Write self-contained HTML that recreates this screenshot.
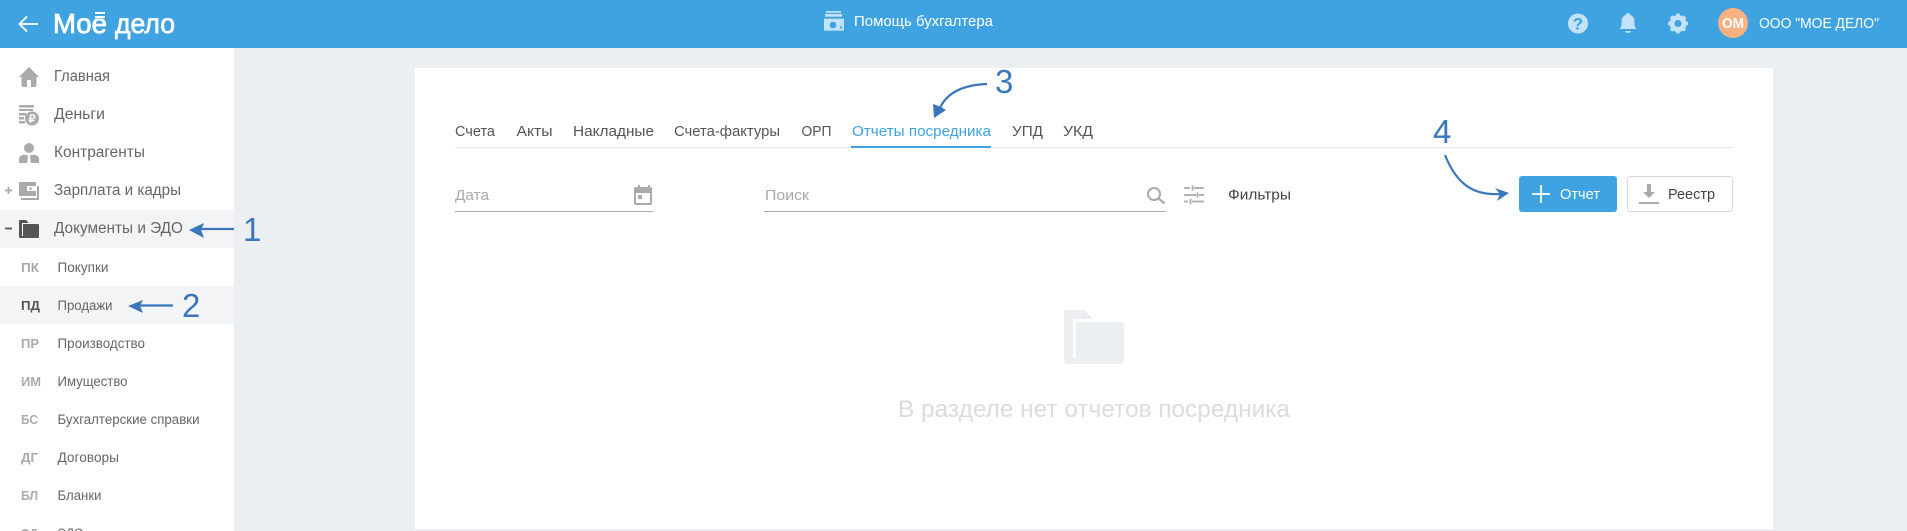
<!DOCTYPE html>
<html lang="ru"><head><meta charset="utf-8"><title>Моё дело</title>
<style>
html,body{margin:0;padding:0;width:1907px;height:531px;overflow:hidden;background:#ebeff2}
svg{display:block}
text{font-family:"Liberation Sans",sans-serif;}
.n{font-size:15.5px;fill:#666}
.s{font-size:13.5px;fill:#666}
.a{font-size:13px;font-weight:bold;fill:#aaa}
.t{font-size:15px;fill:#555}
.d{font-size:33px;fill:#3a76bc}
</style></head><body>
<svg width="1907" height="531" viewBox="0 0 1907 531" xmlns="http://www.w3.org/2000/svg">
<defs></defs>
<rect width="1907" height="531" fill="#ebeff2"/>
<!-- header -->
<rect width="1907" height="48" fill="#3ea3e0"/>
<path d="M38 24H20M27 16.500L19.500 24L27 31.500" fill="none" stroke="#fff" stroke-width="1.800"/>
<text x="53" y="33" font-size="28" fill="#fff" stroke="#fff" stroke-width=".8" textLength="54" lengthAdjust="spacingAndGlyphs">Моё</text>
<rect x="93" y="9" width="14" height="9.500" fill="#3ea3e0"/>
<rect x="95" y="12" width="10" height="2" fill="#fff"/><rect x="95" y="16" width="10" height="2" fill="#fff"/>
<text x="115" y="33" font-size="28" fill="#fff" stroke="#fff" stroke-width=".7" textLength="60" lengthAdjust="spacingAndGlyphs">дело</text>
<g fill="#c2e2f7"><rect x="826" y="11" width="15" height="1.800"/><rect x="825" y="14" width="17" height="2.700"/>
<rect x="824" y="18.700" width="20" height="12"/></g><circle cx="833" cy="25" r="3.300" fill="#3ea3e0"/><rect x="840" y="26.500" width="2" height="2" fill="#3ea3e0"/>
<text x="854" y="26" font-size="15" fill="#fff" textLength="139" lengthAdjust="spacingAndGlyphs">Помощь бухгалтера</text>
<circle cx="1578" cy="23.500" r="10" fill="#c2e2f7"/>
<text x="1578" y="29.500" font-size="17" font-weight="bold" fill="#3ea3e0" text-anchor="middle">?</text>
<path d="M1628 13c1.200 0 2 .8 2 1.800c3 1 4.500 3.500 4.500 7v4.500l2 2.700h-17l2-2.700v-4.500c0-3.500 1.500-6 4.500-7c0-1 .8-1.800 2-1.800zM1625 31h6c-.5 1.500-1.500 2-3 2s-2.500-.5-3-2z" fill="#c2e2f7"/>
<g transform="translate(1678 23.500)"><circle r="6" fill="none" stroke="#c2e2f7" stroke-width="5"/>
<g stroke="#c2e2f7" stroke-width="3.500"><path d="M0-10V-7M0 10V7M-10 0H-7M10 0H7M-7-7L-5-5M7 7L5 5M-7 7L-5 5M7-7L5-5"/></g></g>
<circle cx="1733" cy="23" r="15" fill="#fbb07f"/>
<text x="1722" y="28" font-size="15" font-weight="bold" fill="#fff" textLength="22" lengthAdjust="spacingAndGlyphs">ОМ</text>
<text x="1759" y="28" font-size="15" fill="#fff" textLength="120" lengthAdjust="spacingAndGlyphs">ООО "МОЕ ДЕЛО"</text>
<!-- sidebar -->
<rect y="48" width="234" height="483" fill="#fff"/>
<rect y="210" width="234" height="38" fill="#f3f4f5"/>
<rect y="286" width="234" height="38" fill="#f3f4f5"/>
<path d="M29 67L39 77h-2.500v8c0 1-.7 2-2 2H31v-7h-4v7h-3.500c-1.300 0-2-1-2-2v-8H19z" fill="#aaa"/>
<g fill="#aaa"><rect x="19" y="105" width="15" height="2.500"/><rect x="19" y="109" width="14" height="2"/><rect x="19" y="113" width="7" height="2.500"/><rect x="19" y="117" width="5" height="2.500"/><rect x="19" y="121" width="6" height="2.500"/></g>
<circle cx="32" cy="118.500" r="7" fill="#aaa"/>
<text x="32" y="122.500" font-size="11" font-weight="bold" fill="#fff" text-anchor="middle">₽</text>
<circle cx="29" cy="148" r="5" fill="#aaa"/>
<path d="M24 154.500c1.500 1 8.500 1 10 0c3.500 1 5 2.500 5 4.500v4H19v-4c0-2 1.500-3.500 5-4.500z" fill="#aaa"/>
<path d="M28 155h2l.7 8h-3.400z" fill="#fff"/>
<path d="M19 182h17v14H19z" fill="#aaa"/><rect x="27" y="186" width="9" height="5" fill="#fff"/><circle cx="30.500" cy="188.500" r="1.300" fill="#aaa"/>
<path d="M37 186h2v14H21v-2h16z" fill="#aaa"/>
<path id="f" transform="translate(19 220) scale(.3333) translate(-1064 -310)" d="M1064 313q0-3 3-3h18l8 9h-20v39h3v-36h44q4 0 4 4v34q0 4-4 4h-52q-4 0-4-4z" fill="#555"/>
<path d="M5 190.500h7M8.500 187v7" stroke="#aaa" stroke-width="1.800"/>
<path d="M5 228.500h7" stroke="#555" stroke-width="1.800"/>
<text class="n" x="54" y="81" textLength="56" lengthAdjust="spacingAndGlyphs">Главная</text>
<text class="n" x="54" y="119" textLength="51" lengthAdjust="spacingAndGlyphs">Деньги</text>
<text class="n" x="54" y="157" textLength="91" lengthAdjust="spacingAndGlyphs">Контрагенты</text>
<text class="n" x="54" y="195" textLength="127" lengthAdjust="spacingAndGlyphs">Зарплата и кадры</text>
<text class="n" x="54" y="233" textLength="129" lengthAdjust="spacingAndGlyphs">Документы и ЭДО</text>
<text class="a" x="21" y="272" textLength="18" lengthAdjust="spacingAndGlyphs">ПК</text><text class="s" x="57.500" y="272" textLength="51" lengthAdjust="spacingAndGlyphs">Покупки</text>
<text class="a" x="21" y="310" textLength="19" lengthAdjust="spacingAndGlyphs" style="fill:#555">ПД</text><text class="s" x="57.500" y="310" textLength="55" lengthAdjust="spacingAndGlyphs">Продажи</text>
<text class="a" x="21" y="348" textLength="18" lengthAdjust="spacingAndGlyphs">ПР</text><text class="s" x="57.500" y="348" textLength="87.500" lengthAdjust="spacingAndGlyphs">Производство</text>
<text class="a" x="21" y="386" textLength="20" lengthAdjust="spacingAndGlyphs">ИМ</text><text class="s" x="57.500" y="386" textLength="70" lengthAdjust="spacingAndGlyphs">Имущество</text>
<text class="a" x="21" y="424" textLength="17" lengthAdjust="spacingAndGlyphs">БС</text><text class="s" x="57.500" y="424" textLength="142" lengthAdjust="spacingAndGlyphs">Бухгалтерские справки</text>
<text class="a" x="21" y="462" textLength="17" lengthAdjust="spacingAndGlyphs">ДГ</text><text class="s" x="57.500" y="462" textLength="61.500" lengthAdjust="spacingAndGlyphs">Договоры</text>
<text class="a" x="21" y="500" textLength="17" lengthAdjust="spacingAndGlyphs">БЛ</text><text class="s" x="57.500" y="500" textLength="44" lengthAdjust="spacingAndGlyphs">Бланки</text>
<text class="a" x="21" y="538" textLength="17" lengthAdjust="spacingAndGlyphs">ЭД</text><text class="s" x="57.500" y="538" textLength="26" lengthAdjust="spacingAndGlyphs">ЭДО</text>
<!-- card -->
<rect x="415" y="68" width="1358" height="461" fill="#fff"/>
<text class="t" x="455" y="136" textLength="40" lengthAdjust="spacingAndGlyphs">Счета</text>
<text class="t" x="516.500" y="136" textLength="36" lengthAdjust="spacingAndGlyphs">Акты</text>
<text class="t" x="573" y="136" textLength="81" lengthAdjust="spacingAndGlyphs">Накладные</text>
<text class="t" x="674" y="136" textLength="106" lengthAdjust="spacingAndGlyphs">Счета-фактуры</text>
<text class="t" x="801.500" y="136" textLength="30" lengthAdjust="spacingAndGlyphs">ОРП</text>
<text class="t" x="852" y="136" textLength="139" lengthAdjust="spacingAndGlyphs" style="fill:#3ea3e0">Отчеты посредника</text>
<text class="t" x="1012" y="136" textLength="31" lengthAdjust="spacingAndGlyphs">УПД</text>
<text class="t" x="1063" y="136" textLength="30" lengthAdjust="spacingAndGlyphs">УКД</text>
<rect x="455" y="147" width="1278" height="1" fill="#e3e5e7"/>
<rect x="851" y="146" width="140" height="2" fill="#3ea3e0"/>
<!-- filters -->
<text x="455" y="200" font-size="15" fill="#aaa" textLength="34" lengthAdjust="spacingAndGlyphs">Дата</text>
<rect x="455" y="211" width="198" height="1" fill="#aaa"/>
<path d="M636 187h2v-2h2v2h8v-2h2v2h0.500c1 0 1.500.7 1.500 1.500v14.500c0 1-.7 2-1.500 2h-15c-.8 0-1.500-1-1.500-2V188.500c0-.8.500-1.500 1.500-1.500zM636 193v10h14v-10z" fill="#aaa"/><rect x="638" y="195" width="4" height="4" fill="#aaa"/>
<text x="765" y="200" font-size="15" fill="#aaa" textLength="44" lengthAdjust="spacingAndGlyphs">Поиск</text>
<rect x="764" y="211" width="402" height="1" fill="#aaa"/>
<circle cx="1154" cy="194" r="6" fill="none" stroke="#aaa" stroke-width="2"/><path d="M1158.500 198.500L1164.500 203.500" stroke="#aaa" stroke-width="2.200"/>
<path d="M1184 188h6M1194 188h10M1192.500 185.500v5M1184 195h12M1199 195h5M1197.500 192.500v5M1184 201.500h4M1192 201.500h12M1190.500 199v5" stroke="#aaa" stroke-width="1.800" fill="none"/>
<text x="1228" y="199.500" font-size="15" fill="#444" textLength="63" lengthAdjust="spacingAndGlyphs">Фильтры</text>
<!-- buttons -->
<rect x="1519" y="176" width="98" height="36" rx="3" fill="#3ea3e0"/>
<path d="M1532 194h18M1541 185v18" stroke="#fff" stroke-width="1.700"/>
<text x="1560" y="199" font-size="15" fill="#fff" textLength="40" lengthAdjust="spacingAndGlyphs">Отчет</text>
<rect x="1627.500" y="176.500" width="105" height="35" rx="3" fill="#fff" stroke="#d8d8d8"/>
<path d="M1647 184h4v8h4l-6 6l-6-6h4z" fill="#aaa"/><rect x="1639" y="202" width="20" height="2" fill="#aaa"/>
<text x="1668" y="199" font-size="15" fill="#444" textLength="47" lengthAdjust="spacingAndGlyphs">Реестр</text>
<!-- empty state -->
<path d="M1064 313q0-3 3-3h18l8 9h-20v39h3v-36h44q4 0 4 4v34q0 4-4 4h-52q-4 0-4-4z" fill="#ebeff2"/>
<text x="898" y="417" font-size="24" fill="#dcdcdc" textLength="392" lengthAdjust="spacingAndGlyphs">В разделе нет отчетов посредника</text>
<!-- annotations -->
<g fill="none" stroke="#3a76bc" stroke-width="2.200">
<path d="M234 229H196"/><path d="M173 305.500H136"/>
<path d="M987 84C960 85 945 95 939 110"/>
<path d="M1445 155C1455 180 1470 196 1500 194"/>
</g>
<g fill="#3a76bc">
<path d="M189 230L204 223L201 230L204 238z"/>
<path d="M128 306L143 300L140 306L143 313z"/>
<path d="M934 118L933 104L941 107L946 110z"/>
<path d="M1509 193L1495 188L1500 194L1497 201z"/>
</g>
<text class="d" x="243" y="241">1</text>
<text class="d" x="182" y="317">2</text>
<text class="d" x="995" y="93">3</text>
<text class="d" x="1433" y="143">4</text>
</svg>
</body></html>
